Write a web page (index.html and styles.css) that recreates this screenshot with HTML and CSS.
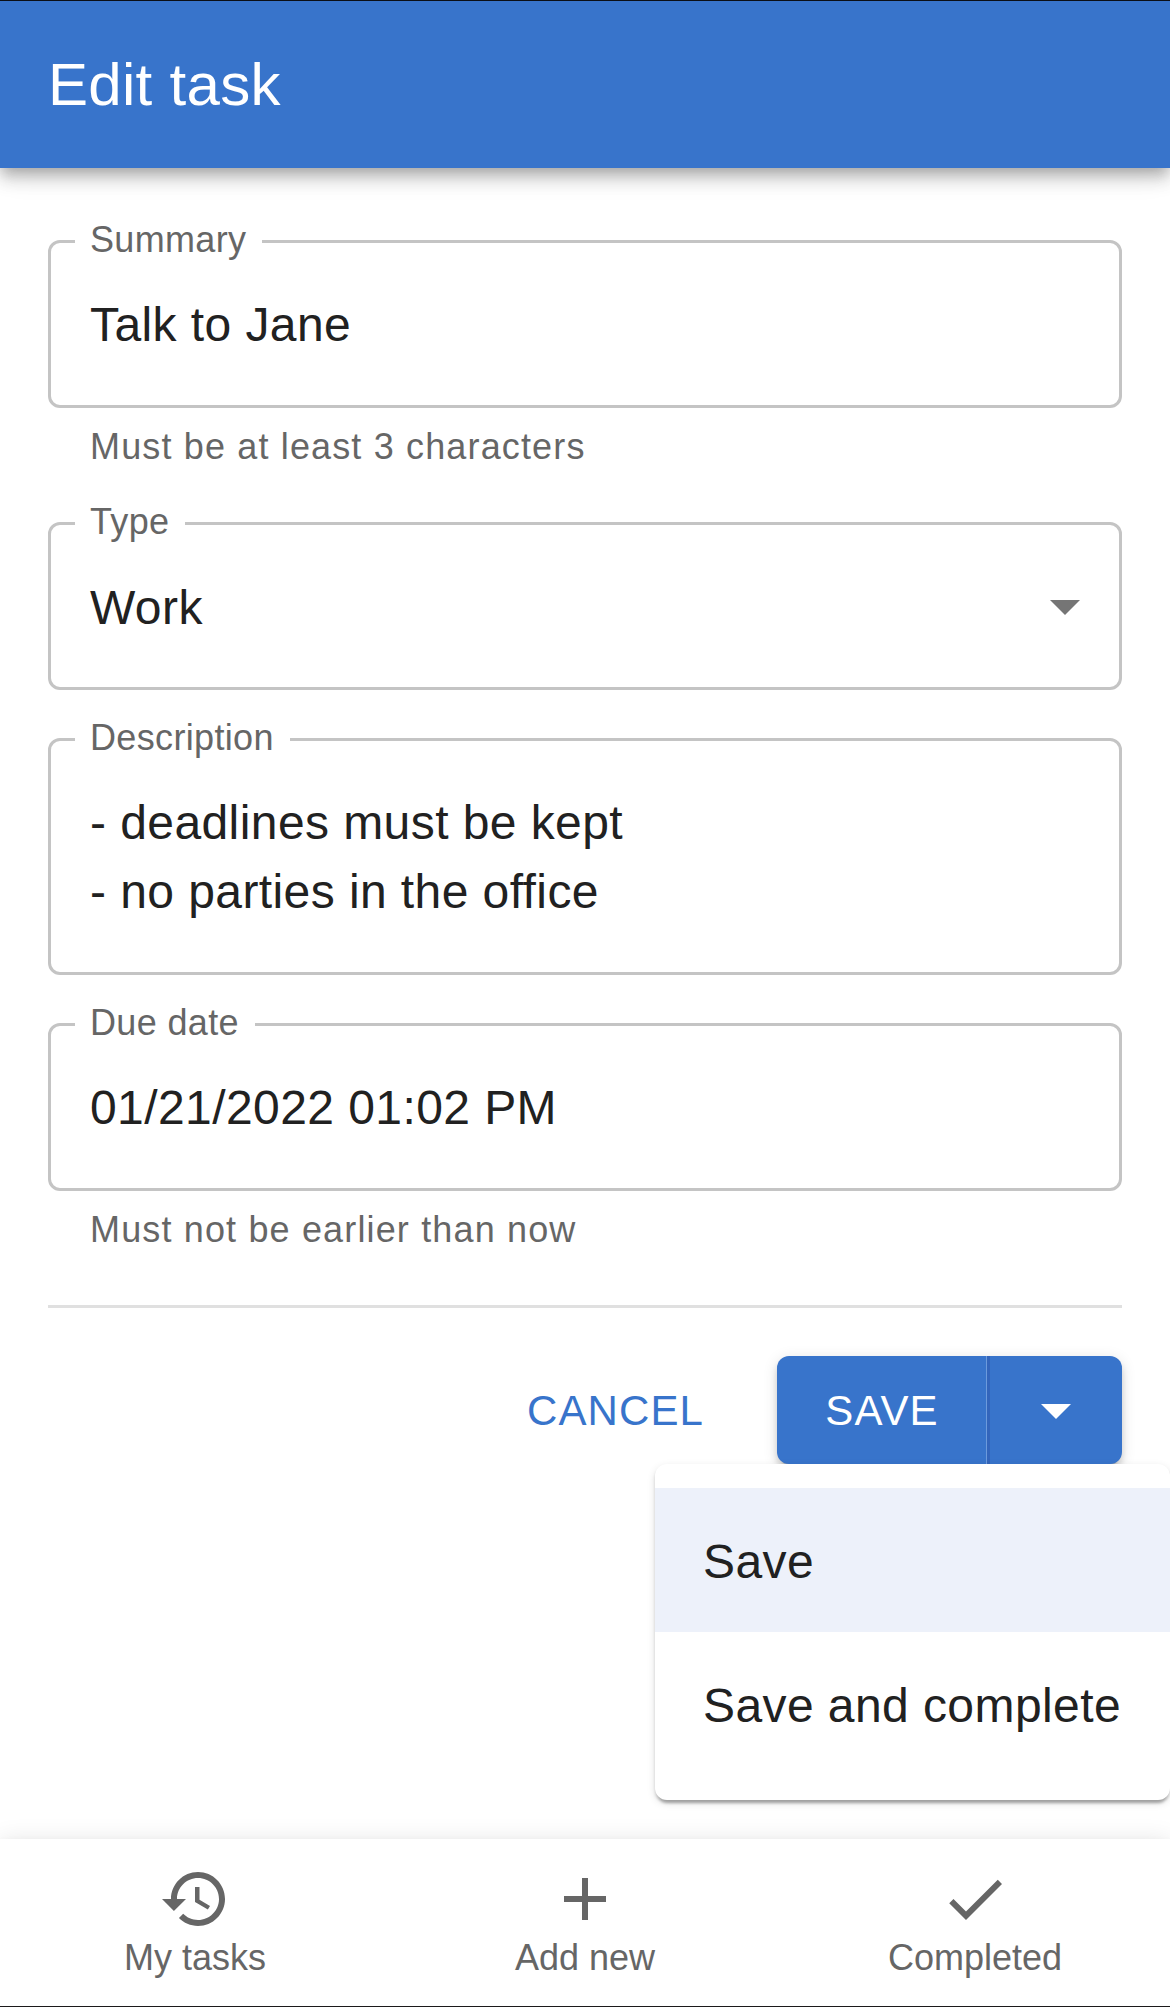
FILE: index.html
```html
<!DOCTYPE html>
<html lang="en">
<head>
<meta charset="utf-8">
<title>Edit task</title>
<link rel="stylesheet" href="styles.css">
</head>
<body>
<div class="app">
  <header class="app-bar"><h1 class="app-title">Edit task</h1></header>

  <main class="form">
    <fieldset class="field">
      <legend class="field-label">Summary</legend>
      <div class="field-value">Talk to Jane</div>
    </fieldset>
    <p class="helper">Must be at least 3 characters</p>

    <fieldset class="field select">
      <legend class="field-label">Type</legend>
      <div class="select-row">
        <div class="field-value">Work</div>
        <svg class="icon select-icon" viewBox="0 0 24 24"><path d="M7 10l5 5 5-5z"/></svg>
      </div>
    </fieldset>

    <fieldset class="field">
      <legend class="field-label">Description</legend>
      <div class="field-value">- deadlines must be kept<br>- no parties in the office</div>
    </fieldset>

    <fieldset class="field">
      <legend class="field-label">Due date</legend>
      <div class="field-value">01/21/2022 01:02 PM</div>
    </fieldset>
    <p class="helper">Must not be earlier than now</p>

    <hr class="divider">

    <div class="actions">
      <button class="btn btn-text" type="button">CANCEL</button>
      <div class="btn-group">
        <button class="btn btn-save" type="button">SAVE</button>
        <button class="btn btn-arrow" type="button" aria-label="Save options">
          <svg class="icon" viewBox="0 0 24 24"><path d="M7 10l5 5 5-5z"/></svg>
        </button>
      </div>
      <ul class="menu">
        <li class="menu-item selected">Save</li>
        <li class="menu-item">Save and complete</li>
      </ul>
    </div>
  </main>

  <nav class="bottom-nav">
    <a class="nav-item">
      <svg class="icon" viewBox="0 0 24 24"><path d="M13 3c-4.97 0-9 4.03-9 9H1l3.89 3.89.07.14L9 12H6c0-3.87 3.13-7 7-7s7 3.13 7 7-3.13 7-7 7c-1.93 0-3.68-.79-4.94-2.06l-1.42 1.42C8.27 19.99 10.51 21 13 21c4.97 0 9-4.03 9-9s-4.03-9-9-9zm-1 5v5l4.28 2.54.72-1.21-3.5-2.08V8H12z"/></svg>
      <span class="nav-label">My tasks</span>
    </a>
    <a class="nav-item">
      <svg class="icon" viewBox="0 0 24 24"><path d="M19 13h-6v6h-2v-6H5v-2h6V5h2v6h6v2z"/></svg>
      <span class="nav-label">Add new</span>
    </a>
    <a class="nav-item">
      <svg class="icon" viewBox="0 0 24 24"><path d="M9 16.17 4.83 12l-1.42 1.41L9 19 21 7l-1.41-1.41z"/></svg>
      <span class="nav-label">Completed</span>
    </a>
  </nav>
</div>
</body>
</html>
```
FILE: styles.css
```css
* { box-sizing: border-box; }

body {
  margin: 0;
  background: #fff;
  color: #212121;
  font-family: "Liberation Sans", Arial, sans-serif;
  font-size: 48px;
  letter-spacing: 0.42px;
}

.app {
  display: flex;
  flex-direction: column;
  height: 2007px;
  overflow: hidden;
}

.icon {
  display: block;
  width: 72px;
  height: 72px;
  fill: currentColor;
}

.app-bar {
  display: flex;
  align-items: center;
  height: 168px;
  padding: 0 48px;
  border-top: 1px solid #0b0f16;
  background: #3874cb;
  color: #fff;
  box-shadow: 0 6px 12px -3px rgba(0, 0, 0, .2), 0 12px 15px rgba(0, 0, 0, .14), 0 3px 30px rgba(0, 0, 0, .12);
}

.app-title {
  margin: 0;
  font-size: 60px;
  font-weight: 400;
  line-height: 96px;
  letter-spacing: 0.3px;
}

.form {
  flex: 1;
  padding: 57px 48px 0;
}

/* The frame line runs through the middle of the 33px legend. */
.field {
  min-width: 0;
  margin: 0 0 33px;
  padding: 0 24px 46px;
  border: 3px solid #c4c4c4;
  border-radius: 12px;
}

.field-label {
  height: 33px;
  padding: 0 16px 0 15px;
  color: #666;
  font-size: 36px;
  line-height: 29px;
  letter-spacing: 0.34px;
}

.field-value {
  padding: 32px 15px 0;
  line-height: 69px;
}

.select-row {
  display: flex;
  justify-content: space-between;
  height: 101px;
}

.select .field-value { padding-top: 33px; }

.select-icon {
  margin: 30px -6px 0 0;
  color: #757575;
}

.helper {
  height: 57px;
  margin: -24px 42px 33px;
  color: #666;
  font-size: 36px;
  line-height: 59px;
  letter-spacing: 1.15px;
}

.divider {
  height: 3px;
  margin: 48px 0 0;
  border: 0;
  background: #e0e0e0;
}

.actions {
  position: relative;
  display: flex;
  justify-content: flex-end;
  gap: 25px;
  margin-top: 48px;
}

.btn {
  height: 108px;
  margin: 0;
  padding: 1px 0 0;
  border: 0;
  background: none;
  font-family: inherit;
  font-size: 42px;
  letter-spacing: 1.1px;
}

.btn-text {
  padding: 1px 48px 0;
  color: #3874cb;
}

.btn-group {
  display: flex;
  width: 345px;
  border-radius: 12px;
  overflow: hidden;
  background: #3874cb;
  box-shadow: 0 9px 3px -6px rgba(0, 0, 0, .2), 0 6px 6px rgba(0, 0, 0, .14), 0 3px 15px rgba(0, 0, 0, .12);
}

.btn-save {
  width: 213px;
  border-right: 3px solid #3365bb;
  box-shadow: inset -1px 0 #6c9adc;
  color: #fff;
}

.btn-arrow {
  display: flex;
  flex: 1;
  align-items: center;
  justify-content: center;
  padding: 0;
  color: #fff;
}

.menu {
  position: absolute;
  top: 108px;
  right: -48px;
  width: 515px;
  margin: 0;
  padding: 24px 0;
  border-radius: 12px;
  background: #fff;
  list-style: none;
  box-shadow: 0 6px 3px -3px rgba(0, 0, 0, .2), 0 3px 3px rgba(0, 0, 0, .14), 0 3px 9px rgba(0, 0, 0, .12);
}

.menu-item {
  height: 144px;
  padding: 2px 48px 0;
  line-height: 144px;
  white-space: nowrap;
}

.menu-item.selected { background: #edf1fa; }

.bottom-nav {
  display: flex;
  height: 168px;
  border-bottom: 1px solid #1c1a1b;
  background: #fff;
  color: #666;
  box-shadow: 0 9px 9px -6px rgba(0, 0, 0, .2), 0 9px 12px rgba(0, 0, 0, .14), 0 3px 24px rgba(0, 0, 0, .12);
}

.nav-item {
  display: flex;
  flex: 1;
  flex-direction: column;
  align-items: center;
  padding-top: 24px;
}

.nav-label {
  font-size: 36px;
  line-height: 46px;
  letter-spacing: 0;
}
```
